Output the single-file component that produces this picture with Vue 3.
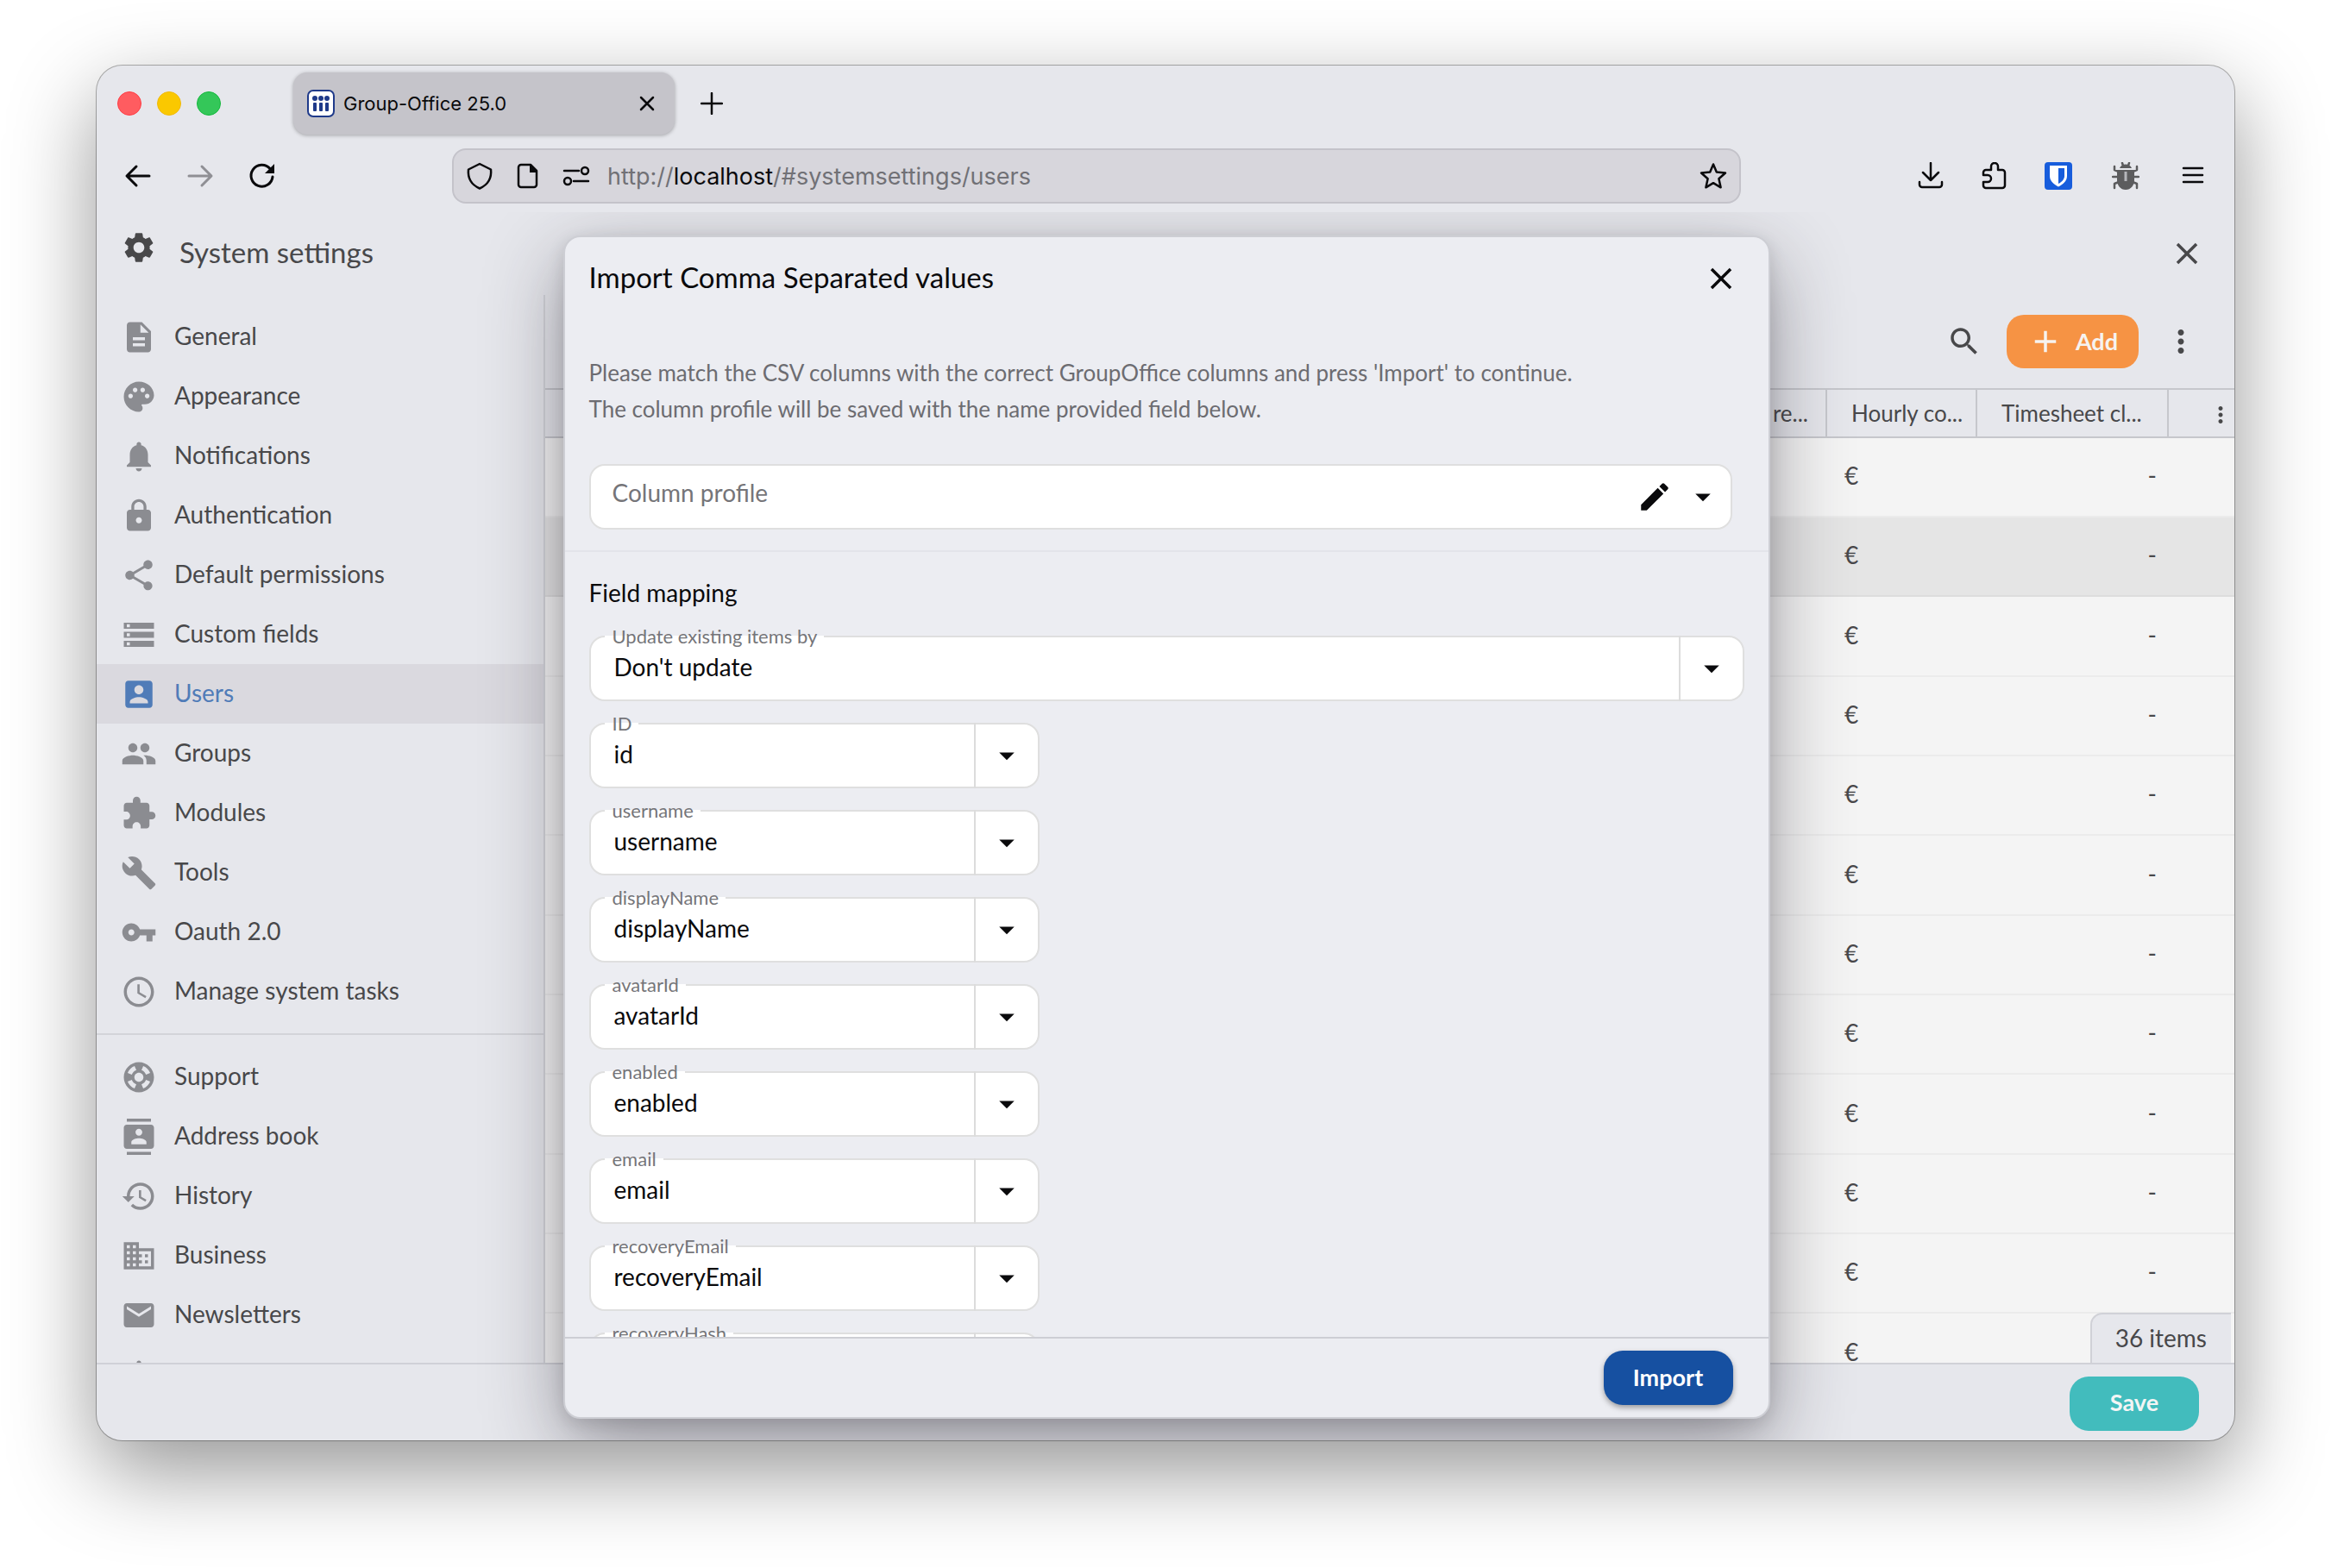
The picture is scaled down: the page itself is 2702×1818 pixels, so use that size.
<template>
  <div class="desktop">
    <div class="window">
      <header class="tabbar">
        <div class="lights">
          <span class="light red"></span>
          <span class="light yellow"></span>
          <span class="light green"></span>
        </div>
        <div class="tab">
          <svg class="favicon" viewBox="0 0 32 32">
            <rect x="1" y="1" width="30" height="30" rx="6" fill="#fff" stroke="#1f3a8a" stroke-width="2"/>
            <g fill="#1f3a8a">
              <circle cx="9" cy="10" r="3"/><circle cx="16" cy="10" r="3"/><circle cx="23" cy="10" r="3"/>
              <rect x="7" y="15" width="4" height="10" rx="1"/><rect x="14" y="15" width="4" height="10" rx="1"/><rect x="21" y="15" width="4" height="10" rx="1"/>
            </g>
          </svg>
          <span class="tab-title">Group-Office 25.0</span>
          <button class="plain" aria-label="Close tab">
            <svg class="tab-close" viewBox="0 0 18 18"><path d="M2 2l14 14M16 2L2 16" class="line"/></svg>
          </button>
        </div>
        <button class="plain new-tab" aria-label="New tab">
          <svg class="tab-plus" viewBox="0 0 26 26"><path d="M13 1v24M1 13h24" class="line"/></svg>
        </button>
      </header>

      <nav class="navbar">
        <div class="nav-left">
          <button class="plain" aria-label="Back">
            <svg class="nav-icon" viewBox="0 0 32 32"><path d="M29 16H4M14 5L3 16l11 11" class="line thick"/></svg>
          </button>
          <button class="plain muted" aria-label="Forward">
            <svg class="nav-icon" viewBox="0 0 32 32"><path d="M3 16h25M18 5l11 11-11 11" class="line thick"/></svg>
          </button>
          <button class="plain" aria-label="Reload">
            <svg class="nav-icon" viewBox="0 0 32 32"><path d="M28 17A12.500 12.500 0 1 1 25 7.500" class="line thick"/><path d="M30 2v11H19z" fill="currentColor"/></svg>
          </button>
        </div>
        <div class="urlbar">
          <div class="url-icons">
            <svg class="nav-icon" viewBox="0 0 32 32"><path d="M16 2l13 6.500C30 18 26 26 16 30.500 6 26 2 18 3 8.500z" class="line"/></svg>
            <svg class="nav-icon" viewBox="0 0 32 32"><path d="M8 3h11l7 7v16a3 3 0 0 1-3 3H8a3 3 0 0 1-3-3V6a3 3 0 0 1 3-3z" class="line"/><path d="M18 3v9h9z" fill="currentColor"/></svg>
            <svg class="nav-icon" viewBox="0 0 32 32"><path d="M2 10h17M13 22h17" class="line"/><circle cx="26" cy="10" r="4" class="line"/><circle cx="6" cy="22" r="4" class="line"/></svg>
          </div>
          <div class="url" role="textbox" aria-label="Address">http://<b>localhost</b>/#systemsettings/users</div>
          <button class="plain" aria-label="Bookmark">
            <svg class="nav-icon" viewBox="0 0 32 32"><path d="M16 2.500l3.800 9 10.200 1-7.600 6.800 2.200 10-8.600-5.100-8.600 5.100 2.200-10L2 12.500l10.200-1z" class="line"/></svg>
          </button>
        </div>
        <div class="nav-right">
          <button class="plain" aria-label="Downloads">
            <svg class="nav-icon" viewBox="0 0 32 32"><path d="M16 1v20M7 12l9 9 9-9M3 23v3a3 3 0 0 0 3 3h20a3 3 0 0 0 3-3v-3" class="line"/></svg>
          </button>
          <button class="plain" aria-label="Extensions">
            <svg class="nav-icon" viewBox="0 0 32 32"><path d="M3 15v-3a3 3 0 0 1 3-3h6V5a4 4 0 0 1 8 0v4h5a3 3 0 0 1 3 3v15a3 3 0 0 1-3 3H6a3 3 0 0 1-3-3v-4h5a4 4 0 0 0 0-8z" class="line"/></svg>
          </button>
          <button class="plain" aria-label="Password manager">
            <svg class="nav-icon" viewBox="0 0 32 32"><rect width="32" height="32" rx="4" fill="#175ddc"/><path d="M6 4h20v12c0 6-5 10-10 12.500C11 26 6 22 6 16z" fill="#fff"/><path d="M16 7h7v9c0 4-3 7-7 9z" fill="#175ddc"/></svg>
          </button>
          <button class="plain bug" aria-label="Debugger">
            <svg class="nav-icon" viewBox="0 0 32 32"><path d="M8 11L3 9V5M24 11l5-2V5M7 17H1M25 17h6M8 23l-5 2v5M24 23l5 2v5M13 4l-1-3M19 4l1-3" class="line"/><path d="M9 7c2-6 12-6 14 0zM6 9h20v12c0 6-4 11-10 11S6 27 6 21z" fill="currentColor"/><path d="M16 11v11" stroke="#b5b6bb" stroke-width="3"/></svg>
          </button>
          <button class="plain" aria-label="Menu">
            <svg class="nav-icon" viewBox="0 0 32 32"><path d="M5 7h22M5 15h22M5 23h22" class="line"/></svg>
          </button>
        </div>
      </nav>

      <div class="app">
        <div class="app-header">
          <svg class="icon gear" viewBox="0 0 24 24"><path :d="icons.settings"/></svg>
          <h1>System settings</h1>
          <button class="plain" aria-label="Close settings">
            <svg class="icon" viewBox="0 0 24 24"><path :d="icons.close"/></svg>
          </button>
        </div>

        <div class="app-body">
          <aside class="sidebar">
            <ul v-for="(group, i) in menu" :key="i">
              <li v-for="item in group" :key="item.icon">
                <a href="#" :class="{ active: item.label === current }" @click.prevent="current = item.label">
                  <svg class="icon" viewBox="0 0 24 24"><path :d="icons[item.icon]" fill-rule="evenodd"/></svg>
                  <span>{{ item.label }}</span>
                </a>
              </li>
            </ul>
          </aside>

          <main class="main">
            <div class="toolbar">
              <button class="plain" aria-label="Search">
                <svg class="icon" viewBox="0 0 24 24"><path :d="icons.search"/></svg>
              </button>
              <button class="add">
                <svg class="icon" viewBox="0 0 24 24"><path :d="icons.add"/></svg>
                <span>Add</span>
              </button>
              <button class="plain" aria-label="More">
                <svg class="icon" viewBox="0 0 24 24"><path :d="icons.more"/></svg>
              </button>
            </div>
            <div class="grid">
              <table>
                <thead>
                  <tr>
                    <th class="right">re...</th>
                    <th class="cost">Hourly co...</th>
                    <th class="timesheet">Timesheet cl...</th>
                    <th class="menu-col"><svg class="icon small" viewBox="0 0 24 24"><path :d="icons.more"/></svg></th>
                  </tr>
                </thead>
                <tbody>
                  <tr v-for="n in 12" :key="n" :class="{ selected: n === 2 }">
                    <td></td>
                    <td>€</td>
                    <td class="right">{{ n < 12 ? '-' : '' }}</td>
                    <td></td>
                  </tr>
                </tbody>
              </table>
              <div class="total">36 items</div>
            </div>
          </main>
        </div>

        <footer class="app-footer">
          <button class="btn save">Save</button>
        </footer>

        <div class="overlay">
          <form class="dialog" role="dialog" aria-labelledby="dialog-title" @submit.prevent>
            <div class="dialog-header">
              <h2 id="dialog-title">Import Comma Separated values</h2>
              <button type="button" class="plain" aria-label="Close dialog">
                <svg class="icon" viewBox="0 0 24 24"><path :d="icons.close"/></svg>
              </button>
            </div>
            <div class="dialog-body">
              <section class="profile">
                <p>
                  Please match the CSV columns with the correct GroupOffice columns and press 'Import' to continue.<br>
                  The column profile will be saved with the name provided field below.
                </p>
                <div class="field profile-field">
                  <input v-model="profile" placeholder="Column profile" aria-label="Column profile">
                  <button type="button" class="plain" aria-label="Edit profile">
                    <svg class="icon" viewBox="0 0 24 24"><path :d="icons.edit"/></svg>
                  </button>
                  <button type="button" class="plain" aria-label="Open profiles">
                    <svg class="icon" viewBox="0 0 24 24"><path :d="icons.caret"/></svg>
                  </button>
                </div>
              </section>
              <section class="mapping">
                <h3>Field mapping</h3>
                <div v-for="f in fields" :key="f.label" class="field" :class="{ short: !f.wide }">
                  <label :for="'map-' + f.label">{{ f.label }}</label>
                  <select :id="'map-' + f.label" v-model="f.value">
                    <option>{{ f.value }}</option>
                  </select>
                  <span class="trigger">
                    <svg class="icon" viewBox="0 0 24 24"><path :d="icons.caret"/></svg>
                  </span>
                </div>
              </section>
            </div>
            <div class="dialog-footer">
              <button class="btn import">Import</button>
            </div>
          </form>
        </div>
      </div>
    </div>
  </div>
</template>

<script setup>
import { ref, reactive } from 'vue'

const current = ref('Users')
const profile = ref('')

const menu = [
  [
    { icon: 'general', label: 'General' },
    { icon: 'palette', label: 'Appearance' },
    { icon: 'bell', label: 'Notifications' },
    { icon: 'lock', label: 'Authentication' },
    { icon: 'share', label: 'Default permissions' },
    { icon: 'storage', label: 'Custom fields' },
    { icon: 'user', label: 'Users' },
    { icon: 'group', label: 'Groups' },
    { icon: 'extension', label: 'Modules' },
    { icon: 'build', label: 'Tools' },
    { icon: 'key', label: 'Oauth 2.0' },
    { icon: 'clock', label: 'Manage system tasks' }
  ],
  [
    { icon: 'support', label: 'Support' },
    { icon: 'contacts', label: 'Address book' },
    { icon: 'history', label: 'History' },
    { icon: 'business', label: 'Business' },
    { icon: 'mail', label: 'Newsletters' },
    { icon: 'bell', label: '' }
  ]
]

const fields = reactive([
  { label: 'Update existing items by', value: "Don't update", wide: true },
  { label: 'ID', value: 'id' },
  { label: 'username', value: 'username' },
  { label: 'displayName', value: 'displayName' },
  { label: 'avatarId', value: 'avatarId' },
  { label: 'enabled', value: 'enabled' },
  { label: 'email', value: 'email' },
  { label: 'recoveryEmail', value: 'recoveryEmail' },
  { label: 'recoveryHash', value: '' }
])

const icons = {
  settings: 'M19.14 12.94c.04-.3.06-.61.06-.94 0-.32-.02-.64-.07-.94l2.03-1.58c.18-.14.23-.41.12-.61l-1.92-3.32c-.12-.22-.37-.29-.59-.22l-2.39.96c-.5-.38-1.03-.7-1.62-.94l-.36-2.54c-.04-.24-.24-.41-.48-.41h-3.84c-.24 0-.43.17-.47.41l-.36 2.54c-.59.24-1.13.57-1.62.94l-2.39-.96c-.22-.08-.47 0-.59.22L2.74 8.87c-.12.21-.08.47.12.61l2.03 1.58c-.05.3-.09.63-.09.94s.02.64.07.94l-2.03 1.58c-.18.14-.23.41-.12.61l1.92 3.32c.12.22.37.29.59.22l2.39-.96c.5.38 1.03.7 1.62.94l.36 2.54c.05.24.24.41.48.41h3.84c.24 0 .44-.17.47-.41l.36-2.54c.59-.24 1.13-.56 1.62-.94l2.39.96c.22.08.47 0 .59-.22l1.92-3.32c.12-.22.07-.47-.12-.61l-2.01-1.58zM12 15.6c-1.98 0-3.6-1.62-3.6-3.6s1.62-3.6 3.6-3.6 3.6 1.62 3.6 3.6-1.62 3.6-3.6 3.6z',
  close: 'M19 6.41L17.59 5 12 10.59 6.41 5 5 6.41 10.59 12 5 17.59 6.41 19 12 13.41 17.59 19 19 17.59 13.41 12z',
  search: 'M15.5 14h-.79l-.28-.27C15.41 12.59 16 11.11 16 9.5 16 5.91 13.09 3 9.5 3S3 5.91 3 9.5 5.91 16 9.5 16c1.61 0 3.09-.59 4.23-1.57l.27.28v.79l5 4.99L20.49 19l-4.99-5zm-6 0C7.01 14 5 11.99 5 9.5S7.01 5 9.5 5 14 7.01 14 9.5 11.99 14 9.5 14z',
  add: 'M19 13h-6v6h-2v-6H5v-2h6V5h2v6h6v2z',
  more: 'M12 8c1.1 0 2-.9 2-2s-.9-2-2-2-2 .9-2 2 .9 2 2 2zm0 2c-1.1 0-2 .9-2 2s.9 2 2 2 2-.9 2-2-.9-2-2-2zm0 6c-1.1 0-2 .9-2 2s.9 2 2 2 2-.9 2-2-.9-2-2-2z',
  edit: 'M3 17.25V21h3.75L17.81 9.94l-3.75-3.75L3 17.25zM20.71 7.04c.39-.39.39-1.02 0-1.41l-2.34-2.34c-.39-.39-1.02-.39-1.41 0l-1.83 1.83 3.75 3.75 1.83-1.83z',
  caret: 'M7 10l5 5 5-5z',
  general: 'M14 2H6c-1.1 0-1.99.9-1.99 2L4 20c0 1.1.89 2 1.99 2H18c1.1 0 2-.9 2-2V8l-6-6zm2 16H8v-2h8v2zm0-4H8v-2h8v2zm-3-5V3.5L18.5 9H13z',
  palette: 'M12 2C6.49 2 2 6.49 2 12s4.49 10 10 10c1.38 0 2.5-1.12 2.5-2.5 0-.61-.23-1.2-.64-1.67-.08-.1-.13-.21-.13-.33 0-.28.22-.5.5-.5H16c3.31 0 6-2.69 6-6 0-4.96-4.49-9-10-9zm5.5 11c-.83 0-1.5-.67-1.5-1.5s.67-1.5 1.5-1.5 1.5.67 1.5 1.5-.67 1.5-1.5 1.5zm-3-4c-.83 0-1.5-.67-1.5-1.5S13.67 6 14.5 6s1.5.67 1.5 1.5S15.33 9 14.5 9zM5 11.5c0-.83.67-1.5 1.5-1.5s1.5.67 1.5 1.5S7.33 13 6.5 13 5 12.33 5 11.5zm6-4c0 .83-.67 1.5-1.5 1.5S8 8.33 8 7.5 8.67 6 9.5 6s1.5.67 1.5 1.5z',
  bell: 'M12 22c1.1 0 2-.9 2-2h-4c0 1.1.89 2 2 2zm6-6v-5c0-3.07-1.64-5.64-4.5-6.32V4c0-.83-.67-1.5-1.5-1.5s-1.5.67-1.5 1.5v.68C7.63 5.36 6 7.92 6 11v5l-2 2v1h16v-1l-2-2z',
  lock: 'M18 8h-1V6c0-2.76-2.24-5-5-5S7 3.24 7 6v2H6c-1.1 0-2 .9-2 2v10c0 1.1.9 2 2 2h12c1.1 0 2-.9 2-2V10c0-1.1-.9-2-2-2zm-6 9c-1.1 0-2-.9-2-2s.9-2 2-2 2 .9 2 2-.9 2-2 2zm3.1-9H8.9V6c0-1.71 1.39-3.1 3.1-3.1 1.71 0 3.1 1.39 3.1 3.1v2z',
  share: 'M18 16.08c-.76 0-1.44.3-1.96.77L8.91 12.7c.05-.23.09-.46.09-.7s-.04-.47-.09-.7l7.05-4.11c.54.5 1.25.81 2.04.81 1.66 0 3-1.34 3-3s-1.34-3-3-3-3 1.34-3 3c0 .24.04.47.09.7L8.04 9.81C7.5 9.31 6.79 9 6 9c-1.66 0-3 1.34-3 3s1.34 3 3 3c.79 0 1.5-.31 2.04-.81l7.12 4.16c-.05.21-.08.43-.08.65 0 1.61 1.31 2.92 2.92 2.92 1.61 0 2.92-1.31 2.92-2.92s-1.31-2.92-2.92-2.92z',
  storage: 'M2 20h20v-4H2v4zm2-3h2v2H4v-2zM2 4v4h20V4H2zm4 3H4V5h2v2zm-4 7h20v-4H2v4zm2-3h2v2H4v-2z',
  user: 'M3 5v14c0 1.1.89 2 2 2h14c1.1 0 2-.9 2-2V5c0-1.1-.9-2-2-2H5c-1.11 0-2 .9-2 2zm12 4c0 1.66-1.34 3-3 3s-3-1.34-3-3 1.34-3 3-3 3 1.34 3 3zm-9 8c0-2 4-3.1 6-3.1s6 1.1 6 3.1v1H6v-1z',
  group: 'M16 11c1.66 0 2.99-1.34 2.99-3S17.66 5 16 5c-1.66 0-3 1.34-3 3s1.34 3 3 3zm-8 0c1.66 0 2.99-1.34 2.99-3S9.66 5 8 5C6.34 5 5 6.34 5 8s1.34 3 3 3zm0 2c-2.33 0-7 1.17-7 3.5V19h14v-2.5c0-2.33-4.67-3.5-7-3.5zm8 0c-.29 0-.62.02-.97.05 1.16.84 1.97 1.97 1.97 3.45V19h6v-2.5c0-2.33-4.67-3.5-7-3.5z',
  extension: 'M20.5 11H19V7c0-1.1-.9-2-2-2h-4V3.5C13 2.12 11.88 1 10.5 1S8 2.12 8 3.5V5H4c-1.1 0-1.99.9-1.99 2v3.8H3.5c1.49 0 2.7 1.21 2.7 2.7s-1.21 2.7-2.7 2.7H2V20c0 1.1.9 2 2 2h3.8v-1.5c0-1.49 1.21-2.7 2.7-2.7 1.49 0 2.7 1.21 2.7 2.7V22H17c1.1 0 2-.9 2-2v-4h1.5c1.38 0 2.5-1.12 2.5-2.5S21.88 11 20.5 11z',
  build: 'M22.7 19l-9.1-9.1c.9-2.3.4-5-1.5-6.9-2-2-5-2.4-7.4-1.3L9 6 6 9 1.6 4.7C.4 7.1.9 10.1 2.9 12.1c1.9 1.9 4.6 2.4 6.9 1.5l9.1 9.1c.4.4 1 .4 1.4 0l2.3-2.3c.5-.4.5-1.1.1-1.4z',
  key: 'M12.65 10C11.83 7.67 9.61 6 7 6c-3.31 0-6 2.69-6 6s2.69 6 6 6c2.61 0 4.83-1.67 5.65-4H17v4h4v-4h2v-4H12.65zM7 14c-1.1 0-2-.9-2-2s.9-2 2-2 2 .9 2 2-.9 2-2 2z',
  clock: 'M11.99 2C6.47 2 2 6.48 2 12s4.47 10 9.99 10C17.52 22 22 17.52 22 12S17.52 2 11.99 2zM12 20c-4.42 0-8-3.58-8-8s3.58-8 8-8 8 3.58 8 8-3.58 8-8 8zm.5-13H11v6l5.25 3.15.75-1.23-4.5-2.67z',
  support: 'M12 2C6.48 2 2 6.48 2 12c0 5.52 4.48 10 10 10s10-4.48 10-10C22 6.48 17.52 2 12 2zM19.46 9.12l-2.78 1.15c-.51-1.36-1.58-2.44-2.95-2.94l1.15-2.78C16.98 5.35 18.65 7.02 19.46 9.12zM12 15c-1.66 0-3-1.34-3-3s1.34-3 3-3 3 1.34 3 3S13.66 15 12 15zM9.13 4.54l1.17 2.78c-1.38.5-2.47 1.59-2.98 2.97L4.54 9.13C5.35 7.02 7.02 5.35 9.13 4.54zM4.54 14.87l2.78-1.15c.51 1.38 1.59 2.46 2.97 2.96l-1.17 2.78C7.02 18.65 5.35 16.98 4.54 14.87zM14.88 19.46l-1.15-2.78c1.37-.51 2.45-1.59 2.95-2.97l2.78 1.17C18.65 16.98 16.98 18.65 14.88 19.46z',
  contacts: 'M20 0H4v2h16V0zM4 24h16v-2H4v2zM20 4H4c-1.1 0-2 .9-2 2v12c0 1.1.9 2 2 2h16c1.1 0 2-.9 2-2V6c0-1.1-.9-2-2-2zm-8 2.75c1.24 0 2.25 1.01 2.25 2.25s-1.01 2.25-2.25 2.25S9.75 10.24 9.75 9 10.76 6.75 12 6.75zM17 17H7v-1.5c0-1.67 3.33-2.5 5-2.5s5 .83 5 2.5V17z',
  history: 'M13 3c-4.97 0-9 4.03-9 9H1l3.89 3.89.07.14L9 12H6c0-3.87 3.13-7 7-7s7 3.13 7 7-3.13 7-7 7c-1.93 0-3.68-.79-4.94-2.06l-1.42 1.42C8.27 19.99 10.51 21 13 21c4.97 0 9-4.03 9-9s-4.03-9-9-9zm-1 5v5l4.28 2.54.72-1.21-3.5-2.08V8H12z',
  business: 'M12 7V3H2v18h20V7H12zM6 19H4v-2h2v2zm0-4H4v-2h2v2zm0-4H4V9h2v2zm0-4H4V5h2v2zm4 12H8v-2h2v2zm0-4H8v-2h2v2zm0-4H8V9h2v2zm0-4H8V5h2v2zm10 12h-8v-2h2v-2h-2v-2h2v-2h-2V9h8v10zm-2-8h-2v2h2v-2zm0 4h-2v2h2v-2z',
  mail: 'M20 4H4c-1.1 0-1.99.9-1.99 2L2 18c0 1.1.9 2 2 2h16c1.1 0 2-.9 2-2V6c0-1.1-.9-2-2-2zm0 4l-8 5-8-5V6l8 5 8-5v2z'
}
</script>

<style>
body {
  background: #fff;
}
</style>

<style scoped>
* {
  box-sizing: border-box;
}
.desktop {
  height: 100vh;
  padding: 76px 112px 148px;
  font-family: Lato, "Liberation Sans", sans-serif;
  font-size: 28px;
  color: #48484a;
}
.window {
  display: flex;
  flex-direction: column;
  height: 100%;
  background: #e6e7ec;
  border-radius: 30px;
  overflow: hidden;
  box-shadow: 0 0 0 1px rgba(0, 0, 0, 0.3), 0 36px 100px rgba(0, 0, 0, 0.42);
}
.plain {
  display: flex;
  padding: 0;
  border: none;
  background: none;
  color: inherit;
}
.line {
  fill: none;
  stroke: currentColor;
  stroke-width: 2.5;
  stroke-linecap: round;
  stroke-linejoin: round;
}
.thick {
  stroke-width: 3;
}

/* browser chrome */
.tabbar {
  display: flex;
  align-items: center;
  height: 88px;
  padding: 0 24px;
  font-family: Inter, "Liberation Sans", sans-serif;
  color: #0a0a0c;
}
.lights {
  display: flex;
  gap: 18px;
  margin-right: 84px;
}
.light {
  width: 28px;
  height: 28px;
  border-radius: 50%;
  border: 1px solid #ff3c44;
  background: #ff5c60;
}
.yellow {
  border-color: #f0b90a;
  background: #fac800;
}
.green {
  border-color: #14b83c;
  background: #34c759;
}
.tab {
  display: flex;
  align-items: center;
  gap: 10px;
  width: 442px;
  height: 72px;
  padding: 0 23px 0 16px;
  border-radius: 16px;
  background: #c5c4ca;
  box-shadow: 0 1px 4px rgba(0, 0, 0, 0.3);
  font-size: 22px;
}
.favicon {
  width: 32px;
  height: 32px;
}
.tab-title {
  flex: 1;
}
.tab-close {
  width: 18px;
  height: 18px;
}
.new-tab {
  margin-left: 30px;
}
.tab-plus {
  width: 26px;
  height: 26px;
}
.navbar {
  display: flex;
  align-items: center;
  height: 82px;
  padding: 0 32px 2px;
  font-family: Inter, "Liberation Sans", sans-serif;
  color: #0a0a0c;
}
.nav-icon {
  width: 32px;
  height: 32px;
}
.nav-left {
  display: flex;
  gap: 40px;
}
.muted {
  color: #8f8f94;
}
.urlbar {
  display: flex;
  flex: 1;
  align-items: center;
  gap: 20px;
  height: 64px;
  margin: 0 204px;
  padding: 0 14px;
  border: 2px solid #c4c3ca;
  border-radius: 16px;
  background: #d7d6dc;
}
.url-icons {
  display: flex;
  gap: 24px;
}
.url {
  flex: 1;
  font-size: 27px;
  color: #717176;
}
.url b {
  font-weight: normal;
  color: #0a0a0c;
}
.nav-right {
  display: flex;
  gap: 42px;
}
.bug {
  margin: 0 4px;
  color: #5c5c5e;
}

/* settings app */
.app {
  position: relative;
  display: flex;
  flex: 1;
  flex-direction: column;
  min-height: 0;
  overflow: hidden;
}
.icon {
  flex: none;
  width: 42px;
  height: 42px;
  fill: currentColor;
}
.app-header {
  display: flex;
  flex: none;
  align-items: center;
  gap: 26px;
  height: 96px;
  padding: 0 34px 0 28px;
}
.gear {
  margin-bottom: 14px;
}
h1,
h2 {
  margin: 0;
  padding-bottom: 4px;
  font-size: 33px;
  font-weight: normal;
}
h1 {
  flex: 1;
}
.app-body {
  display: flex;
  flex: 1;
  min-height: 0;
}
.sidebar {
  width: 520px;
  border-right: 2px solid #d3d4d9;
  overflow: hidden;
}
.sidebar ul {
  margin: 0;
  padding: 14px 0;
  list-style: none;
}
.sidebar ul + ul {
  border-top: 2px solid #d3d4d9;
}
.sidebar a {
  display: flex;
  align-items: center;
  gap: 20px;
  height: 69px;
  padding-left: 28px;
  color: #48484a;
  text-decoration: none;
}
.sidebar span {
  padding-bottom: 4px;
}
.sidebar .icon {
  fill: #8b8c91;
}
.sidebar .active {
  background: #dad9df;
  color: #507cb8;
}
.sidebar .active .icon {
  fill: #507cb8;
}
.main {
  display: flex;
  flex: 1;
  flex-direction: column;
  min-width: 0;
}
.toolbar {
  display: flex;
  flex: none;
  align-items: center;
  justify-content: flex-end;
  gap: 28px;
  height: 108px;
  padding-right: 41px;
}
.add {
  display: flex;
  align-items: center;
  gap: 14px;
  height: 62px;
  padding: 0 24px;
  border: none;
  border-radius: 20px;
  background: #f69344;
  color: #f6f3f0;
  font: bold 27px Lato, sans-serif;
}
.add span {
  padding-bottom: 2px;
}
.grid {
  position: relative;
  flex: 1;
  overflow: hidden;
  background: #f4f4f4;
}
table {
  width: 100%;
  table-layout: fixed;
  border-collapse: separate;
  border-spacing: 0;
}
th {
  height: 58px;
  padding: 0 20px 0 28px;
  border: solid #c6c7cc;
  border-width: 2px 2px 2px 0;
  background: #e6e7ec;
  font-size: 26px;
  font-weight: normal;
  text-align: left;
  white-space: nowrap;
}
.cost {
  width: 174px;
  padding-right: 0;
}
.timesheet {
  width: 222px;
}
.menu-col {
  width: 76px;
  padding: 0;
  border-right: none;
  text-align: right;
}
.small {
  width: 30px;
  height: 30px;
  margin-right: 1px;
  vertical-align: middle;
}
.right {
  text-align: right;
}
td {
  height: 92px;
  padding: 0 14px 4px 20px;
  border-bottom: 2px solid #ebebeb;
}
tr:nth-child(3n) td {
  height: 93px;
}
.selected td {
  background: #e5e5e5;
  border-color: #dddddd;
}
.total {
  position: absolute;
  right: 4px;
  bottom: 0;
  height: 58px;
  padding: 0 28px 0 27px;
  border: solid #d0d1d7;
  border-width: 2px 0 0 2px;
  border-radius: 14px 0 0 0;
  background: #e6e7ec;
  line-height: 54px;
}
.app-footer {
  display: flex;
  flex: none;
  align-items: center;
  justify-content: flex-end;
  height: 90px;
  padding-right: 41px;
  padding-top: 2px;
  border-top: 2px solid #d0d1d7;
}
.btn {
  width: 150px;
  height: 63px;
  padding: 0 0 3px;
  border: none;
  border-radius: 22px;
  color: #fff;
  font: bold 27px Lato, sans-serif;
}
.save {
  background: #42bcbd;
  color: #f3f5f5;
}

/* import dialog */
.overlay {
  position: absolute;
  inset: 0;
  display: flex;
  align-items: center;
  justify-content: center;
  padding: 2px 0 0 2px;
}
.dialog {
  display: flex;
  flex-direction: column;
  width: 1399px;
  max-width: 100%;
  height: calc(100% - 50px);
  border: 2px solid #cdced4;
  border-radius: 20px;
  overflow: hidden;
  background: #ecedf2;
  color: #0a0a0c;
  box-shadow: 0 30px 90px rgba(40, 36, 48, 0.44), 0 6px 20px rgba(0, 0, 0, 0.12);
}
.dialog-header {
  display: flex;
  flex: none;
  align-items: center;
  justify-content: space-between;
  height: 96px;
  padding: 0 34px 0 28px;
}
.dialog-body {
  flex: 1;
  min-height: 0;
  overflow: hidden;
}
.profile {
  padding: 40px 28px 24px;
  border-bottom: 2px solid #e3e4ea;
}
p {
  margin: 0 0 43px;
  font-size: 26px;
  line-height: 42px;
  color: #6c6c71;
}
.mapping {
  padding: 26px 28px;
}
h3 {
  margin: 0 0 29px;
  font-size: 28px;
  font-weight: normal;
  font-variant-ligatures: none;
  line-height: 42px;
}
.field {
  position: relative;
  display: flex;
  height: 76px;
  margin-bottom: 25px;
  border: 2px solid #dfdfdf;
  border-radius: 18px;
  background: #fff;
}
.short {
  width: 522px;
}
.profile-field {
  align-items: center;
  gap: 14px;
  margin: 0 14px 0 0;
  padding-right: 11px;
}
.field input,
.field select {
  flex: 1;
  min-width: 0;
  border: none;
  outline: none;
  background: none;
  color: #0a0a0c;
  font: 28px Lato, sans-serif;
}
.field input {
  height: 72px;
  padding: 0 0 10px 25px;
}
.field input::placeholder {
  color: #757579;
  opacity: 1;
}
.field select {
  appearance: none;
  padding: 0 76px 4px 27px;
}
.field label {
  position: absolute;
  top: -16px;
  left: 16px;
  padding: 0 8px 0 9px;
  background: linear-gradient(transparent 14px, #fff 14px);
  color: #757579;
  font-size: 22px;
  line-height: 30px;
}
.trigger {
  position: absolute;
  inset: -2px 0 -2px auto;
  display: flex;
  align-items: center;
  justify-content: center;
  width: 74px;
  border-left: 2px solid #dcdcdc;
  pointer-events: none;
}
.dialog-footer {
  display: flex;
  flex: none;
  align-items: center;
  justify-content: flex-end;
  height: 93px;
  padding-right: 41px;
  border-top: 2px solid #cdced4;
}
.import {
  background: #1650a1;
  box-shadow: 0 3px 6px rgba(0, 0, 0, 0.35);
}
</style>
